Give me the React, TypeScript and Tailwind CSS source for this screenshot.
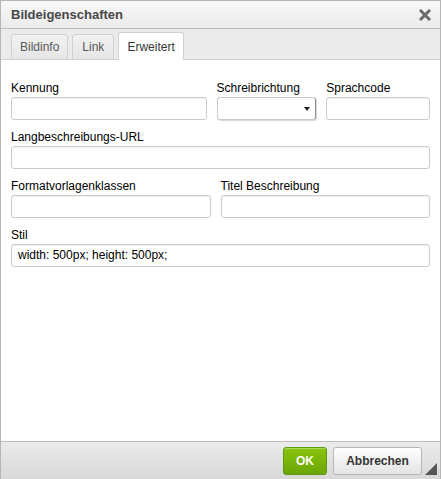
import React from "react";

const font = { fontFamily: '"Liberation Sans", Arial, sans-serif' };

function Field({ label, className = "", value = "" }: { label: string; className?: string; value?: string }) {
  return (
    <div className={`flex flex-col ${className}`}>
      <div className="h-[17px] text-[12px] leading-[17px] text-[#000]">{label}</div>
      <div className="h-[23px] rounded-[3px] border border-[#c9cccf] bg-white shadow-[inset_0_1px_0_rgba(0,0,0,0.05)] px-[6px] text-[12px] leading-[21px] text-[#000]">
        {value}
      </div>
    </div>
  );
}

export default function App() {
  return (
    <div style={font} className="w-[441px] h-[479px] flex flex-col border-x border-t border-[#b6b6b6] bg-white overflow-hidden">
      {/* title */}
      <div className="h-[28px] shrink-0 flex items-center justify-between pl-[10px] pr-[8px] bg-gradient-to-b from-[#f8f8f8] to-[#ebebeb] border-b border-[#bcbcbc]">
        <span className="text-[13px] font-bold text-[#474747]">Bildeigenschaften</span>
        <svg width="12" height="12" viewBox="0 0 12 12" className="mt-[1px] mr-[1px]">
          <path d="M2 2 L10 10 M10 2 L2 10" stroke="#6b6b6b" strokeWidth="3" strokeLinecap="square" />
        </svg>
      </div>
      {/* tabs */}
      <div className="h-[31px] shrink-0 bg-[#ebebeb] border-b border-[#d1d1d1] flex items-end pl-[10px] gap-[4px]">
        <div className="h-[26px] mb-[-1px] px-[8px] flex items-center rounded-t-[3px] border border-[#d1d1d1] bg-gradient-to-b from-[#f2f2f2] to-[#e6e6e6] text-[12px] text-[#595959]">Bildinfo</div>
        <div className="h-[26px] mb-[-1px] px-[9px] flex items-center rounded-t-[3px] border border-[#d1d1d1] bg-gradient-to-b from-[#f2f2f2] to-[#e6e6e6] text-[12px] text-[#595959]">Link</div>
        <div className="h-[28px] mb-[-1px] px-[8px] flex items-center rounded-t-[3px] border border-b-0 border-[#d1d1d1] bg-white text-[12px] text-[#383838]">Erweitert</div>
      </div>
      {/* body */}
      <div className="flex-1 px-[10px] pt-[20px] flex flex-col gap-[9px]">
        <div className="flex gap-[10px]">
          <Field label="Kennung" className="w-[196px]" />
          <div className="flex flex-col w-[100px]">
            <div className="h-[17px] text-[12px] leading-[17px] text-[#000]">Schreibrichtung</div>
            <div className="h-[23px] rounded-[3px] border border-[#c9cccf] border-r-[#8f8f8f] bg-white flex items-center justify-end pr-[5px] shadow-[1px_1px_0_rgba(0,0,0,0.15)]">
              <svg width="6" height="4" viewBox="0 0 6 4"><path d="M0 0 H6 L3 4 Z" fill="#222" /></svg>
            </div>
          </div>
          <Field label="Sprachcode" className="w-[104px]" />
        </div>
        <Field label="Langbeschreibungs-URL" />
        <div className="flex gap-[10px]">
          <Field label="Formatvorlagenklassen" className="w-[200px]" />
          <Field label="Titel Beschreibung" className="w-[210px]" />
        </div>
        <Field label="Stil" value="width: 500px; height: 500px;" />
      </div>
      {/* footer */}
      <div className="h-[38px] shrink-0 border-t border-[#bcbcbc] bg-gradient-to-b from-[#ebebeb] to-[#d8d8d8] relative flex items-start justify-end pt-[5px] pr-[18px] gap-[6px]">
        <div className="h-[28px] w-[44px] rounded-[3px] border border-[#5e9a0e] bg-gradient-to-b from-[#8ac50f] to-[#6aa505] flex items-center justify-center text-[12px] font-bold text-white shadow-[inset_0_1px_0_rgba(255,255,255,0.3)]">OK</div>
        <div className="h-[28px] w-[89px] rounded-[3px] border border-[#b6b6b6] bg-gradient-to-b from-[#ffffff] to-[#e4e4e4] flex items-center justify-center text-[12px] font-bold text-[#333]">Abbrechen</div>
        <svg width="12" height="12" viewBox="0 0 12 12" className="absolute right-[3px] bottom-[4px]">
          <path d="M12 0 L12 12 L0 12 Z" fill="#555" />
        </svg>
      </div>
    </div>
  );
}
